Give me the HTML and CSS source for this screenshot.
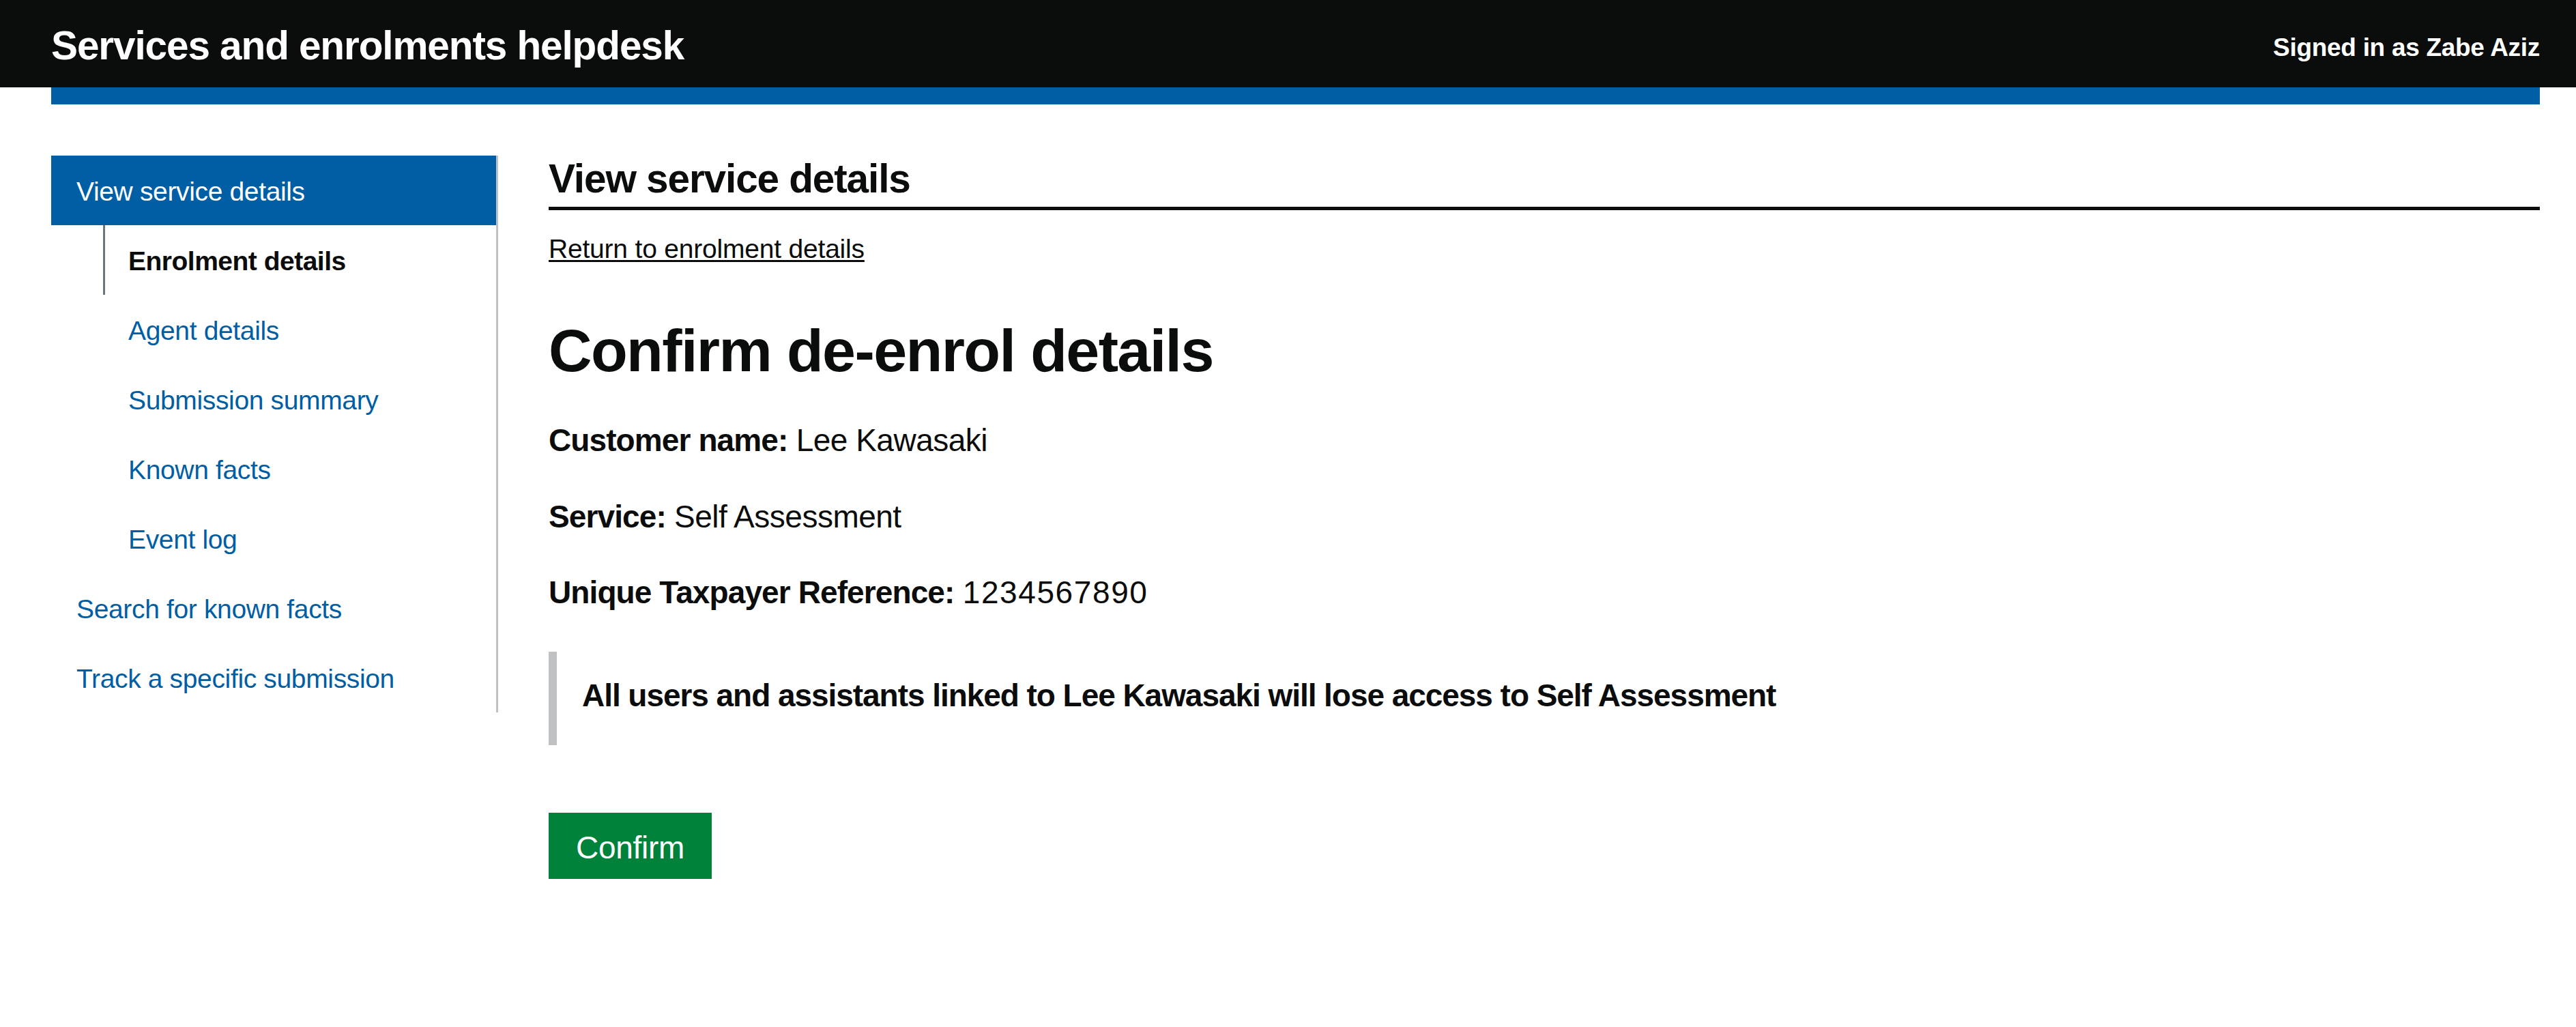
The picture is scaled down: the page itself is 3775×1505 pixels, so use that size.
FILE: index.html
```html
<!DOCTYPE html>
<html lang="en">
<head>
<meta charset="utf-8">
<title>Confirm de-enrol details - Services and enrolments helpdesk</title>
<link rel="stylesheet" href="styles.css">
</head>
<body>
<header class="header">
  <div class="header__inner">
    <a class="header__service" href="#">Services and enrolments helpdesk</a>
    <span class="header__user">Signed in as Zabe Aziz</span>
  </div>
</header>
<div class="container">
  <div class="header-rule"></div>
  <div class="layout">
    <nav class="sidenav">
      <ul class="sidenav__list">
        <li class="sidenav__item sidenav__item--current"><a class="sidenav__link" href="#">View service details</a>
          <ul class="sidenav__sublist">
            <li class="sidenav__subitem sidenav__subitem--active"><a class="sidenav__link sidenav__link--active" href="#">Enrolment details</a></li>
            <li class="sidenav__subitem"><a class="sidenav__link" href="#">Agent details</a></li>
            <li class="sidenav__subitem"><a class="sidenav__link" href="#">Submission summary</a></li>
            <li class="sidenav__subitem"><a class="sidenav__link" href="#">Known facts</a></li>
            <li class="sidenav__subitem"><a class="sidenav__link" href="#">Event log</a></li>
          </ul>
        </li>
        <li class="sidenav__item"><a class="sidenav__link" href="#">Search for known facts</a></li>
        <li class="sidenav__item"><a class="sidenav__link" href="#">Track a specific submission</a></li>
      </ul>
    </nav>
    <main class="main">
      <h2 class="section-heading">View service details</h2>
      <p class="back"><a class="back__link" href="#">Return to enrolment details</a></p>
      <h1 class="page-heading">Confirm de-enrol details</h1>
      <p class="body"><strong class="label">Customer name:</strong> Lee Kawasaki</p>
      <p class="body"><strong class="label">Service:</strong> Self Assessment</p>
      <p class="body"><strong class="label">Unique Taxpayer Reference:</strong> <span class="number">1234567890</span></p>
      <div class="inset">All users and assistants linked to Lee Kawasaki will lose access to Self Assessment</div>
      <button class="button" type="submit">Confirm</button>
    </main>
  </div>
</div>
</body>
</html>
```
FILE: styles.css
```css
html, body {
  margin: 0;
  padding: 0;
  background: #ffffff;
}

body {
  font-family: "Liberation Sans", Arial, sans-serif;
  color: #0b0c0c;
}

.header {
  background: #0b0c0c;
  height: 128px;
}

.header__inner {
  display: flex;
  justify-content: space-between;
  align-items: flex-start;
  padding: 0 53px 0 75px;
}

.header__service {
  margin-top: 37px;
  font-size: 58.5px;
  line-height: 60px;
  font-weight: 700;
  letter-spacing: -1.1px;
  color: #ffffff;
  text-decoration: none;
}

.header__user {
  margin-top: 50px;
  font-size: 37px;
  line-height: 40px;
  font-weight: 700;
  letter-spacing: -0.3px;
  color: #ffffff;
}

.container {
  padding: 0 53px 0 75px;
}

.header-rule {
  height: 25px;
  background: #005ea5;
}

.layout {
  display: flex;
  align-items: flex-start;
  margin-top: 75px;
}

.sidenav {
  flex: 0 0 655px;
  box-sizing: border-box;
  border-right: 3px solid #bfc1c3;
}

.sidenav__list,
.sidenav__sublist {
  list-style: none;
  margin: 0;
  padding: 0;
}

.sidenav__link {
  display: block;
  padding: 33px 0 29px 37px;
  font-size: 39px;
  line-height: 40px;
  letter-spacing: -0.35px;
  color: #005ea5;
  text-decoration: none;
}

.sidenav__item--current > .sidenav__link {
  background: #005ea5;
  color: #ffffff;
}

.sidenav__sublist {
  padding-left: 76px;
}

.sidenav__subitem {
  border-left: 3px solid transparent;
}

.sidenav__subitem > .sidenav__link {
  padding-left: 34px;
}

.sidenav__subitem--active {
  border-left-color: #6f777b;
}

.sidenav__link--active {
  font-weight: 700;
  letter-spacing: -0.5px;
  color: #0b0c0c;
}

.main {
  flex: 1 1 auto;
  margin-left: 74px;
}

.section-heading {
  margin: 0;
  padding-bottom: 8px;
  border-bottom: 5px solid #0b0c0c;
  font-size: 58.5px;
  line-height: 67px;
  font-weight: 700;
  letter-spacing: -1.1px;
}

.back {
  margin: 32px 0 0;
  font-size: 39px;
  line-height: 50px;
  letter-spacing: -0.2px;
}

.back__link {
  color: #0b0c0c;
  text-decoration: underline;
  text-decoration-thickness: 3px;
  text-underline-offset: 3px;
}

.page-heading {
  margin: 74px 0 50px;
  font-size: 88px;
  line-height: 100px;
  font-weight: 700;
  letter-spacing: -1.6px;
}

.body {
  margin: 0 0 49px;
  font-size: 46px;
  line-height: 62.5px;
  letter-spacing: -0.5px;
}

.label {
  font-weight: 700;
  letter-spacing: -0.9px;
}

.number {
  letter-spacing: 1.6px;
}

.inset {
  margin: 55px 0 99px;
  padding: 33px 0 41.5px 37px;
  border-left: 12px solid #bfc1c3;
  font-size: 46px;
  line-height: 62.5px;
  font-weight: 700;
  letter-spacing: -1.05px;
}

.button {
  display: inline-block;
  margin: 0;
  padding: 20px 40px 14.5px;
  border: 0;
  border-radius: 0;
  background: #00823b;
  box-shadow: 0 5px 0 #003618;
  font-family: "Liberation Sans", Arial, sans-serif;
  font-size: 46px;
  line-height: 62.5px;
  letter-spacing: -0.3px;
  color: #ffffff;
  cursor: pointer;
}
```
